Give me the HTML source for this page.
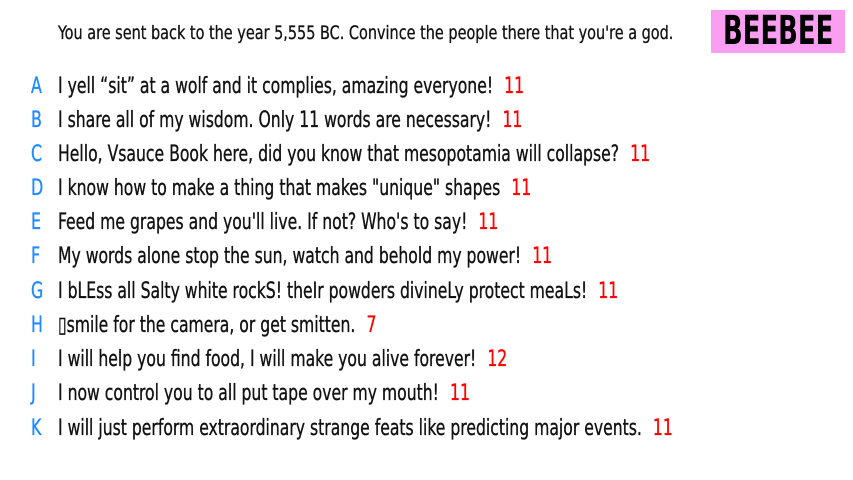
<!DOCTYPE html>
<html><head><meta charset="utf-8"><style>
html,body{margin:0;padding:0;background:#fff;}
body{width:853px;height:480px;position:relative;overflow:hidden;font-family:"Liberation Sans Narrow","DejaVu Sans Condensed","Liberation Sans",sans-serif;color:#111;}
.hdr{position:absolute;left:58px;top:21px;font-size:19px;line-height:24px;white-space:nowrap;transform:scaleX(0.845);transform-origin:left center;-webkit-text-stroke:0.3px #111;}
.box{position:absolute;left:711px;top:10px;width:134px;height:43px;background:#f99ef0;}
.box span{position:absolute;left:12px;top:0;font-size:40px;font-weight:bold;line-height:43px;color:#000;white-space:nowrap;transform:scaleX(0.72);transform-origin:left center;}
.row{position:absolute;left:0;height:30px;font-size:22px;line-height:30px;white-space:nowrap;-webkit-text-stroke:0.35px currentColor;}
.l{position:absolute;left:31px;color:#1e8cff;transform:scaleX(0.8);transform-origin:left center;}
.t{position:absolute;left:58px;transform:scaleX(0.79);transform-origin:left center;}
.n{color:#f00;margin-left:14px;}
</style></head><body>
<div class="hdr">You are sent back to the year 5,555 BC. Convince the people there that you're a god.</div>
<div class="box"><span>BEEBEE</span></div>
<div class="row" style="top:72px"><span class="l">A</span><span class="t">I yell “sit” at a wolf and it complies, amazing everyone!<span class="n">11</span></span></div>
<div class="row" style="top:106px"><span class="l">B</span><span class="t">I share all of my wisdom. Only 11 words are necessary!<span class="n">11</span></span></div>
<div class="row" style="top:140px"><span class="l">C</span><span class="t">Hello, Vsauce Book here, did you know that mesopotamia will collapse?<span class="n">11</span></span></div>
<div class="row" style="top:174px"><span class="l">D</span><span class="t">I know how to make a thing that makes "unique" shapes<span class="n">11</span></span></div>
<div class="row" style="top:208px"><span class="l">E</span><span class="t">Feed me grapes and you'll live. If not? Who's to say!<span class="n">11</span></span></div>
<div class="row" style="top:242px"><span class="l">F</span><span class="t">My words alone stop the sun, watch and behold my power!<span class="n">11</span></span></div>
<div class="row" style="top:277px"><span class="l">G</span><span class="t">I bLEss all Salty white rockS! theIr powders divineLy protect meaLs!<span class="n">11</span></span></div>
<div class="row" style="top:311px"><span class="l">H</span><span class="t">&#9647;smile for the camera, or get smitten.<span class="n">7</span></span></div>
<div class="row" style="top:345px"><span class="l">I</span><span class="t">I will help you find food, I will make you alive forever!<span class="n">12</span></span></div>
<div class="row" style="top:379px"><span class="l">J</span><span class="t">I now control you to all put tape over my mouth!<span class="n">11</span></span></div>
<div class="row" style="top:414px"><span class="l">K</span><span class="t">I will just perform extraordinary strange feats like predicting major events.<span class="n">11</span></span></div>
</body></html>
